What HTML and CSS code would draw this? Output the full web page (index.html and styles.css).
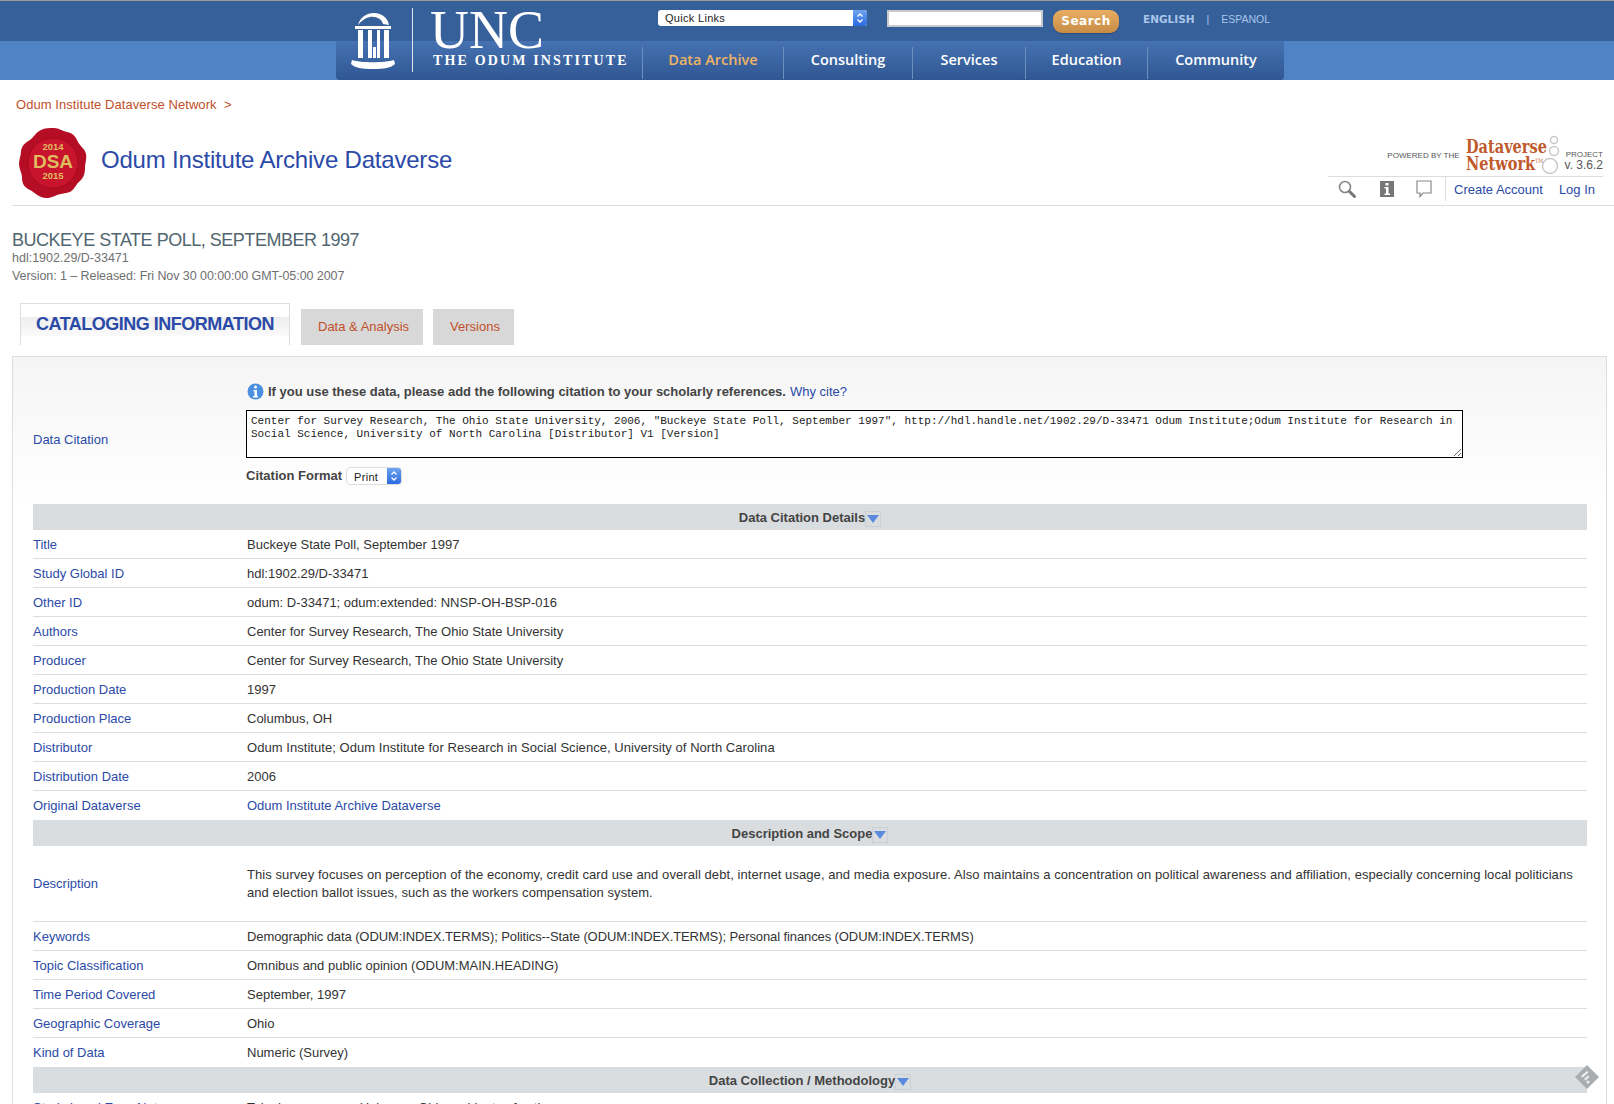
FILE: index.html
```html
<!DOCTYPE html>
<html lang="en">
<head>
	<meta charset="UTF-8">
	<title>Buckeye State Poll, September 1997</title>
	<link rel="stylesheet" href="styles.css">
</head>
<body>
	<div class="masthead">
		<div class="mast-inner">
			<div class="mast-logo">
				<svg class="well" width="46" height="58" viewBox="0 0 46 58">
					<path fill="#fff" d="M8 13C10 5 17 1 24 1c8 0 14 5 15 12l-6-1C32 7 26 4 20 5c-5 1-9 4-12 8z"/>
					<path fill="#fff" d="M5 14h36v3H5z"/>
					<path fill="#fff" d="M8 18h5v28H8zM18 18h4v28h-4zM27 18h3v28h-3zM34 18h5v28h-5z"/>
					<path fill="#fff" d="M23 35h3v11h-3z"/>
					<path fill="#fff" d="M2 48c8 3 33 3 42 0l1 4c-4 4-11 5-22 5S5 56 1 52z"/>
				</svg>
				<div class="logo-text">
					<div class="logo-unc">UNC</div>
					<div class="logo-odum">THE ODUM INSTITUTE</div>
				</div>
			</div>
			<div class="mast-right">
				<div class="tools">
					<div class="mac-select quick">
						<span class="mac-label">Quick Links</span>
						<span class="mac-arrows"><svg width="8" height="12" viewBox="0 0 8 12"><path fill="none" stroke="#fff" stroke-width="1.3" d="M1.5 4.5 4 2l2.5 2.5M1.5 7.5 4 10l2.5-2.5"/></svg></span>
					</div>
					<input class="search-box" type="text">
					<span class="search-btn">Search</span>
					<div class="langs">
						<b>ENGLISH</b>
						<span class="lang-sep">|</span>
						<span>ESPANOL</span>
					</div>
				</div>
				<ul class="nav">
					<li class="nav-a on">Data Archive</li>
					<li class="nav-b">Consulting</li>
					<li class="nav-c">Services</li>
					<li class="nav-d">Education</li>
					<li class="nav-e">Community</li>
				</ul>
			</div>
		</div>
	</div>

	<div class="crumbs"><a href="#">Odum Institute Dataverse Network</a>&nbsp; &gt;</div>

	<div class="dv-head">
		<svg class="seal" width="70" height="72" viewBox="0 0 70 72">
			<path fill="#b50d24" d="M36 1c5 0 8 3 13 4 6 1 9 5 11 10 2 4 7 7 8 12 1 5-1 9-1 14 0 5-1 9-5 13-4 3-5 8-10 11-5 2-10 1-15 4-5 2-9 3-14 1-5-2-8-6-13-8-5-3-6-7-6-12 0-4-3-8-3-13 0-5 2-8 2-13 1-6 4-8 9-11 4-3 6-8 11-10 4-2 8-2 13-2z"/>
			<circle cx="35" cy="36" r="25" fill="#c8142c"/>
			<circle cx="35" cy="36" r="25" fill="none" stroke="#a80c22" stroke-width="1"/>
			<text class="seal-year" x="35" y="23" text-anchor="middle">2014</text>
			<text class="seal-dsa" x="35" y="41" text-anchor="middle">DSA</text>
			<text class="seal-year" x="35" y="52" text-anchor="middle">2015</text>
		</svg>
		<h1 class="dv-title"><a href="#">Odum Institute Archive Dataverse</a></h1>
		<div class="dv-side">
			<div class="powered">
				<span class="powered-by">POWERED BY THE</span>
				<div class="dvn-name"><span>Dataverse</span><span>Network<sup>TM</sup></span></div>
				<svg class="dvn-rings" width="22" height="40" viewBox="0 0 22 40">
					<circle cx="13" cy="5" r="3.5" fill="none" stroke="#c9c9c9" stroke-width="1.5"/>
					<circle cx="13" cy="16" r="4.5" fill="none" stroke="#c9c9c9" stroke-width="1.5"/>
					<circle cx="9" cy="31" r="7.5" fill="none" stroke="#c9c9c9" stroke-width="1.5"/>
				</svg>
				<div class="dvn-ver"><span>PROJECT</span><br>v. 3.6.2</div>
			</div>
			<div class="account">
				<div class="acc-icons">
					<svg width="20" height="20" viewBox="0 0 20 20"><circle cx="8" cy="8" r="5.5" fill="none" stroke="#888" stroke-width="1.6"/><path stroke="#777" stroke-width="3" stroke-linecap="round" d="m12.5 12.5 5 5"/></svg>
					<svg width="14" height="16" viewBox="0 0 14 16"><path fill="#777" d="M0 0h14v16H0z"/><path fill="#fff" d="M5.5 2h3v2.500h-3zM4.500 6h4v6.500h1.500V14H4.500v-1.500H6V7.500H4.500z"/></svg>
					<svg width="16" height="18" viewBox="0 0 16 18"><path fill="#fff" stroke="#888" stroke-width="1.2" d="M1 1h14v12H7l-3 3.500V13H1z"/></svg>
				</div>
				<div class="acc-links"><a href="#">Create Account</a><a href="#">Log In</a></div>
			</div>
		</div>
	</div>

	<div class="study">
		<h2 class="study-title">BUCKEYE STATE POLL, SEPTEMBER 1997</h2>
		<div class="study-meta">hdl:1902.29/D-33471</div>
		<div class="study-meta study-ver">Version: 1 – Released: Fri Nov 30 00:00:00 GMT-05:00 2007</div>
	</div>

	<div class="tabs">
		<div class="tab-on"><span>CATALOGING INFORMATION</span></div>
		<a class="tab" href="#">Data &amp; Analysis</a>
		<a class="tab" href="#">Versions</a>
	</div>

	<div class="panel">
		<div class="cite-row">
			<div class="label cite-label"><a href="#">Data Citation</a></div>
			<div class="cite-body">
				<div class="cite-note">
					<svg width="17" height="17" viewBox="0 0 17 17"><circle cx="8.500" cy="8.500" r="8" fill="#4a8fe0"/><circle cx="8.500" cy="4" r="1.500" fill="#fff"/><path fill="#fff" d="M6.500 7h3.500v6h1v1.500H6V13h1.500V8.500h-1z"/></svg>
					<b>If you use these data, please add the following citation to your scholarly references.</b>
					<a href="#">Why cite?</a>
				</div>
				<textarea class="cite-text" readonly>Center for Survey Research, The Ohio State University, 2006, "Buckeye State Poll, September 1997", http://hdl.handle.net/1902.29/D-33471 Odum Institute;Odum Institute for Research in Social Science, University of North Carolina [Distributor] V1 [Version]</textarea>
				<div class="cite-format">
					<b>Citation Format</b>
					<div class="mac-select format">
						<span class="mac-label">Print</span>
						<span class="mac-arrows"><svg width="8" height="12" viewBox="0 0 8 12"><path fill="none" stroke="#fff" stroke-width="1.3" d="M1.500 4.500 4 2l2.500 2.500M1.500 7.500 4 10l2.500-2.500"/></svg></span>
					</div>
				</div>
			</div>
		</div>

		<div class="section">Data Citation Details<span class="toggle"><svg width="12" height="8" viewBox="0 0 12 8"><path fill="#5a8ae0" d="M0 0h12L6 8z"/></svg></span></div>
		<div class="row"><div class="label"><a href="#">Title</a></div><div class="value">Buckeye State Poll, September 1997</div></div>
		<div class="row"><div class="label"><a href="#">Study Global ID</a></div><div class="value">hdl:1902.29/D-33471</div></div>
		<div class="row"><div class="label"><a href="#">Other ID</a></div><div class="value">odum: D-33471; odum:extended: NNSP-OH-BSP-016</div></div>
		<div class="row"><div class="label"><a href="#">Authors</a></div><div class="value">Center for Survey Research, The Ohio State University</div></div>
		<div class="row"><div class="label"><a href="#">Producer</a></div><div class="value">Center for Survey Research, The Ohio State University</div></div>
		<div class="row"><div class="label"><a href="#">Production Date</a></div><div class="value">1997</div></div>
		<div class="row"><div class="label"><a href="#">Production Place</a></div><div class="value">Columbus, OH</div></div>
		<div class="row"><div class="label"><a href="#">Distributor</a></div><div class="value wide">Odum Institute; Odum Institute for Research in Social Science, University of North Carolina</div></div>
		<div class="row"><div class="label"><a href="#">Distribution Date</a></div><div class="value">2006</div></div>
		<div class="row no-line"><div class="label"><a href="#">Original Dataverse</a></div><div class="value"><a href="#">Odum Institute Archive Dataverse</a></div></div>

		<div class="section">Description and Scope<span class="toggle"><svg width="12" height="8" viewBox="0 0 12 8"><path fill="#5a8ae0" d="M0 0h12L6 8z"/></svg></span></div>
		<div class="row tall"><div class="label"><a href="#">Description</a></div><div class="value wider">This survey focuses on perception of the economy, credit card use and overall debt, internet usage, and media exposure. Also maintains a concentration on political awareness and affiliation, especially concerning local politicians and election ballot issues, such as the workers compensation system.</div></div>
		<div class="row"><div class="label"><a href="#">Keywords</a></div><div class="value tight">Demographic data (ODUM:INDEX.TERMS); Politics--State (ODUM:INDEX.TERMS); Personal finances (ODUM:INDEX.TERMS)</div></div>
		<div class="row"><div class="label"><a href="#">Topic Classification</a></div><div class="value">Omnibus and public opinion (ODUM:MAIN.HEADING)</div></div>
		<div class="row"><div class="label"><a href="#">Time Period Covered</a></div><div class="value">September, 1997</div></div>
		<div class="row"><div class="label"><a href="#">Geographic Coverage</a></div><div class="value">Ohio</div></div>
		<div class="row no-line"><div class="label"><a href="#">Kind of Data</a></div><div class="value">Numeric (Survey)</div></div>

		<div class="section">Data Collection / Methodology<span class="toggle"><svg width="12" height="8" viewBox="0 0 12 8"><path fill="#5a8ae0" d="M0 0h12L6 8z"/></svg></span></div>
		<div class="row"><div class="label"><a href="#">Study Level Error Notes</a></div><div class="value">Telephone survey ; Universe: Ohio residents of voting age</div></div>
	</div>

	<svg class="feedback" width="26" height="26" viewBox="0 0 26 26">
		<path fill="#a9adb0" d="M13 1 25 13 13 25 1 13z"/>
		<path fill="#eee" d="M7 12l6-5 1.500 1.500-6 5zM10 15l4-3.500 1.500 1.500-4 3.500zM12.500 18a1.500 1.500 0 1 0 3 0 1.500 1.500 0 1 0-3 0z"/>
	</svg>
</body>
</html>
```
FILE: styles.css
```css
*{
	margin: 0;
	padding: 0;
	box-sizing: border-box;
}
html,body{
	height: 1104px;
	overflow: hidden;
}
body{
	position: relative;
	background: #fff;
	color: #333;
	font-family: "Liberation Sans", Arial, sans-serif;
	font-size: 13px;
}
ul{
	list-style: none;
}
a{
	color: #2b4aa8;
	text-decoration: none;
}

/* top banner */
.masthead{
	height: 80px;
	border-top: 1px solid #9a9a9a;
	background: linear-gradient(#36609a 0, #36609a 40px, #4f83c6 40px, #4f83c6 100%);
}
.mast-inner{
	width: 948px;
	height: 79px;
	margin-left: 336px;
	display: flex;
	background: linear-gradient(transparent 0, transparent 40px, #4672b2 40px, #2f5792 100%);
	border-radius: 0 0 4px 4px;
}
.mast-logo{
	width: 306px;
	display: flex;
}
.well{
	margin: 11px 0 0 14px;
}
.logo-text{
	margin: 7px 0 0 16px;
	padding-left: 18px;
	height: 64px;
	border-left: 1px solid #dfe6f0;
}
.logo-unc{
	color: #fff;
	font-family: "Liberation Serif", serif;
	font-size: 54px;
	line-height: 45px;
	margin-left: -1px;
}
.logo-odum{
	color: #fff;
	font-family: "Liberation Serif", serif;
	font-size: 14px;
	font-weight: bold;
	letter-spacing: 2.15px;
	white-space: nowrap;
	padding-left: 2px;
}
.mast-right{
	flex: 1;
}
.tools{
	height: 40px;
	display: flex;
	align-items: flex-start;
	padding: 9px 0 0 16px;
}
.mac-select{
	display: flex;
	background: #fff;
	border-radius: 3px;
	overflow: hidden;
	color: #222;
}
.mac-label{
	flex: 1;
	font-size: 11px;
	letter-spacing: .3px;
	padding-left: 7px;
}
.mac-arrows{
	width: 14px;
	display: flex;
	align-items: center;
	justify-content: center;
	background: linear-gradient(#6ea3ef, #2a6ae0);
}
.quick{
	width: 209px;
	height: 16px;
	line-height: 16px;
}
.search-box{
	width: 156px;
	height: 17px;
	margin-left: 20px;
	border: 2px solid #c9c9c9;
	background: #fff;
}
.search-btn{
	width: 66px;
	height: 23px;
	margin-left: 10px;
	border-radius: 9px;
	background: linear-gradient(#e8ad62, #c78d45);
	box-shadow: 0 1px 1px #2a4a78;
	color: #fff;
	font-family: "DejaVu Sans", sans-serif;
	font-size: 12px;
	font-weight: bold;
	line-height: 23px;
	text-align: center;
	letter-spacing: .5px;
}
.langs{
	margin: 3px 0 0 24px;
	display: flex;
	color: #a9c6ea;
	font-size: 10.5px;
	white-space: nowrap;
}
.langs b{
	font-family: "DejaVu Sans", sans-serif;
	font-size: 10.5px;
}
.lang-sep{
	margin: 0 12px;
}
.nav{
	display: flex;
	height: 39px;
	padding-top: 6px;
}
.nav li{
	height: 32px;
	border-left: 1px solid #6d8fc0;
	color: #fff;
	font-family: "Open Sans", sans-serif;
	font-size: 14.500px;
	font-weight: 600;
	line-height: 26px;
	text-align: center;
}
.nav .on{
	color: #f0b465;
}
.nav-a{
	width: 141px;
}
.nav-b{
	width: 129px;
}
.nav-c{
	width: 113px;
}
.nav-d{
	width: 122px;
}
.nav-e{
	width: 137px;
}

/* breadcrumb and dataverse header */
.crumbs{
	padding: 17px 0 0 16px;
	height: 47px;
	color: #c0502a;
	line-height: 16px;
	letter-spacing: .06px;
}
.crumbs a{
	color: #c0502a;
}
.dv-head{
	margin-left: 12px;
	height: 79px;
	display: flex;
	border-bottom: 1px solid #ddd;
}
.seal{
	margin-left: 6px;
}
.seal-year{
	fill: #e0bc60;
	font-family: "Liberation Sans", sans-serif;
	font-size: 9.500px;
	font-weight: bold;
}
.seal-dsa{
	fill: #e0bc60;
	font-family: "Liberation Sans", sans-serif;
	font-size: 19px;
	font-weight: bold;
}
.dv-title{
	margin: 19px 0 0 13px;
	font-size: 24px;
	font-weight: normal;
	line-height: 28px;
	letter-spacing: -.2px;
}
.dv-side{
	margin: 7px 11px 0 auto;
	width: 275px;
}
.powered{
	height: 43px;
	display: flex;
	align-items: center;
	justify-content: flex-end;
	border-bottom: 1px solid #ddd;
}
.powered-by{
	color: #555;
	font-size: 8px;
	margin: 0 6px 0 0;
	white-space: nowrap;
}
.dvn-name{
	width: 84px;
	color: #c0592b;
	font-family: "DejaVu Serif Condensed", "Liberation Serif", serif;
	font-size: 19px;
	font-weight: bold;
	line-height: 17px;
	white-space: nowrap;
}
.dvn-name span{
	display: block;
	transform: scaleX(.85);
	transform-origin: left;
}
.dvn-name sup{
	font-size: 6px;
	font-weight: normal;
	vertical-align: 7px;
	line-height: 0;
}
.dvn-rings{
	margin: 0 -1px 0 -9px;
}
.dvn-ver{
	color: #555;
	font-size: 12px;
	line-height: 11px;
	margin: 8px 0 0 3px;
	text-align: right;
	white-space: nowrap;
}
.dvn-ver span{
	font-size: 8px;
}
.account{
	display: flex;
	height: 24px;
	align-items: center;
}
.acc-icons{
	width: 118px;
	height: 24px;
	display: flex;
	align-items: center;
	justify-content: space-between;
	padding: 0 13px 0 9px;
	border-right: 1px solid #ddd;
}
.acc-links{
	display: flex;
	gap: 16px;
	padding-left: 8px;
}

/* study title */
.study{
	padding: 26px 0 0 12px;
	height: 97px;
}
.study-title{
	color: #51666f;
	font-size: 18px;
	font-weight: normal;
	line-height: 17px;
	letter-spacing: -.48px;
}
.study-meta{
	color: #707070;
	font-size: 12.500px;
	line-height: 18px;
}
.study-ver{
	letter-spacing: -.07px;
}

/* tabs */
.tabs{
	margin-left: 20px;
	height: 42px;
	display: flex;
	align-items: flex-end;
}
.tab-on{
	width: 270px;
	height: 42px;
	border: 1px solid #ddd;
	border-bottom: none;
	padding-left: 15px;
	margin-right: 11px;
	background: linear-gradient(#fff 0, #fff 13px, #eee 13px, #fafafa 32px, #fff 32px);
	color: #2b4aa8;
	font-size: 18px;
	font-weight: bold;
	line-height: 40px;
	letter-spacing: -.5px;
}
.tab{
	height: 36px;
	padding: 0 14px 0 17px;
	margin-right: 10px;
	background: #d8d8d8;
	color: #c0502a;
	line-height: 36px;
}

/* main panel */
.panel{
	margin: 11px 7px 0 12px;
	height: 760px;
	border: 1px solid #ddd;
	border-bottom: none;
	padding: 0 19px 0 20px;
	background: linear-gradient(#f5f5f5 0, #fff 150px);
}
.cite-row{
	display: flex;
	height: 147px;
}
.label{
	width: 214px;
	flex-shrink: 0;
	line-height: 18px;
}
.cite-label{
	padding-top: 74px;
}
.cite-body{
	flex: 1;
	padding-top: 25px;
}
.cite-note{
	height: 18px;
	display: flex;
	align-items: center;
	gap: 4px;
	color: #444;
}
.cite-text{
	display: block;
	width: 1217px;
	height: 48px;
	margin: 10px 0 0 -1px;
	padding: 4px 4px;
	border: 1px solid #000;
	border-radius: 0;
	outline: none;
	color: #222;
	font-family: "Liberation Mono", monospace;
	font-size: 11px;
	line-height: 13px;
	background: #fff;
}
.cite-format{
	margin: 8px 0 0 -1px;
	display: flex;
	align-items: center;
	gap: 4px;
	color: #444;
}
.format{
	width: 56px;
	height: 18px;
	line-height: 18px;
	border: 1px solid #ddd;
	border-radius: 4px;
	margin-top: 1px;
}
.section{
	height: 26px;
	padding-top: 1px;
	display: flex;
	align-items: center;
	justify-content: center;
	background: #d9dde0;
	color: #444;
	font-weight: bold;
}
.toggle{
	width: 16px;
	height: 16px;
	margin-top: 2px;
	display: flex;
	align-items: center;
	justify-content: center;
	border: 1px solid #ccd0d4;
}
.row{
	display: flex;
	align-items: center;
	height: 29px;
	padding-top: 1px;
	border-bottom: 1px solid #ddd;
}
.no-line{
	padding-top: 0;
	border-bottom: none;
}
.tall{
	height: 76px;
	padding-top: 0;
}
.value{
	flex: 1;
	line-height: 18px;
}
.wide{
	letter-spacing: .05px;
}
.wider{
	letter-spacing: .07px;
}
.tight{
	letter-spacing: -.1px;
}
.feedback{
	position: absolute;
	left: 1574px;
	top: 1064px;
}
```
